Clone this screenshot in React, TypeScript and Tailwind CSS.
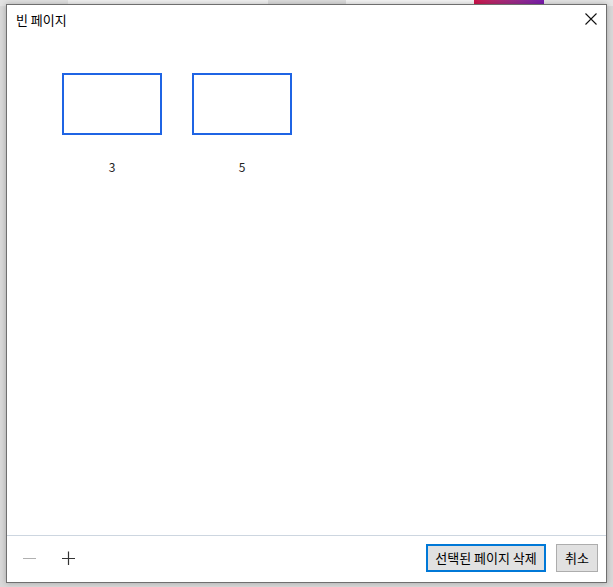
import React from "react";

const font = { fontFamily: '"Noto Sans CJK KR", "Noto Sans", sans-serif' };

function Thumb({ label }: { label: string }) {
  return (
    <div className="flex w-[100px] flex-col items-center">
      <div className="h-[62px] w-[100px] border-2 border-[#1f64e4] bg-white" />
      <div className="mt-[25px] text-[12px] leading-[14px] text-[#222]">{label}</div>
    </div>
  );
}

export default function App() {
  return (
    <div className="relative h-[587px] w-[613px] overflow-hidden bg-[#d9d9d9]" style={font}>
      {/* background strip of the underlying desktop */}
      <div className="absolute left-0 right-0 top-0 flex h-[6px]">
        <div className="w-[68px] bg-[#e3e3e3]" />
        <div className="w-[200px] bg-[#f2f2f2]" />
        <div className="w-[78px] bg-[#dedede]" />
        <div className="w-[128px] bg-[#f6f6f6]" />
        <div className="w-[70px] bg-gradient-to-r from-[#d0104a] to-[#7a1ab0]" />
        <div className="flex-1 bg-[#e6e6e6]" />
      </div>
      {/* dialog window */}
      <div className="absolute left-[6px] top-[4px] flex h-[579px] w-[601px] flex-col border border-[#6f6f6f] bg-white shadow-[0_0_6px_rgba(0,0,0,0.25)]">
        <div className="flex h-[28px] items-center justify-between pl-[9px] pr-[8px]">
          <span className="text-[13px] leading-none text-black">빈 페이지</span>
          <svg width="12" height="12" viewBox="0 0 12 12" className="mr-[1px]">
            <path d="M0.5 0.5 L11.5 11.5 M11.5 0.5 L0.5 11.5" stroke="#111" strokeWidth="1.1" />
          </svg>
        </div>
        <div className="flex flex-1 gap-[30px] pl-[55px] pt-[40px]">
          <Thumb label="3" />
          <Thumb label="5" />
        </div>
        <div className="flex h-[47px] items-start border-t border-[#cdd6e0] pt-[8px]">
          <div className="flex h-[28px] flex-1 items-center gap-[25px] pl-[16px]">
            <svg width="14" height="14" viewBox="0 0 14 14">
              <path d="M0 7.5 H13" stroke="#b0b0b0" strokeWidth="1" />
            </svg>
            <svg width="14" height="14" viewBox="0 0 14 14">
              <path d="M0 7.5 H13 M6.5 0.5 V14" stroke="#333" strokeWidth="1.2" />
            </svg>
          </div>
          <div className="flex gap-[10px] pr-[8px]">
            <button className="flex h-[28px] w-[120px] items-center justify-center border-2 border-[#0078d7] bg-[#e1e1e1] text-[13px] text-black">
              선택된 페이지 삭제
            </button>
            <button className="flex h-[28px] w-[42px] items-center justify-center border border-[#adadad] bg-[#e1e1e1] text-[13px] text-black">
              취소
            </button>
          </div>
        </div>
      </div>
    </div>
  );
}
